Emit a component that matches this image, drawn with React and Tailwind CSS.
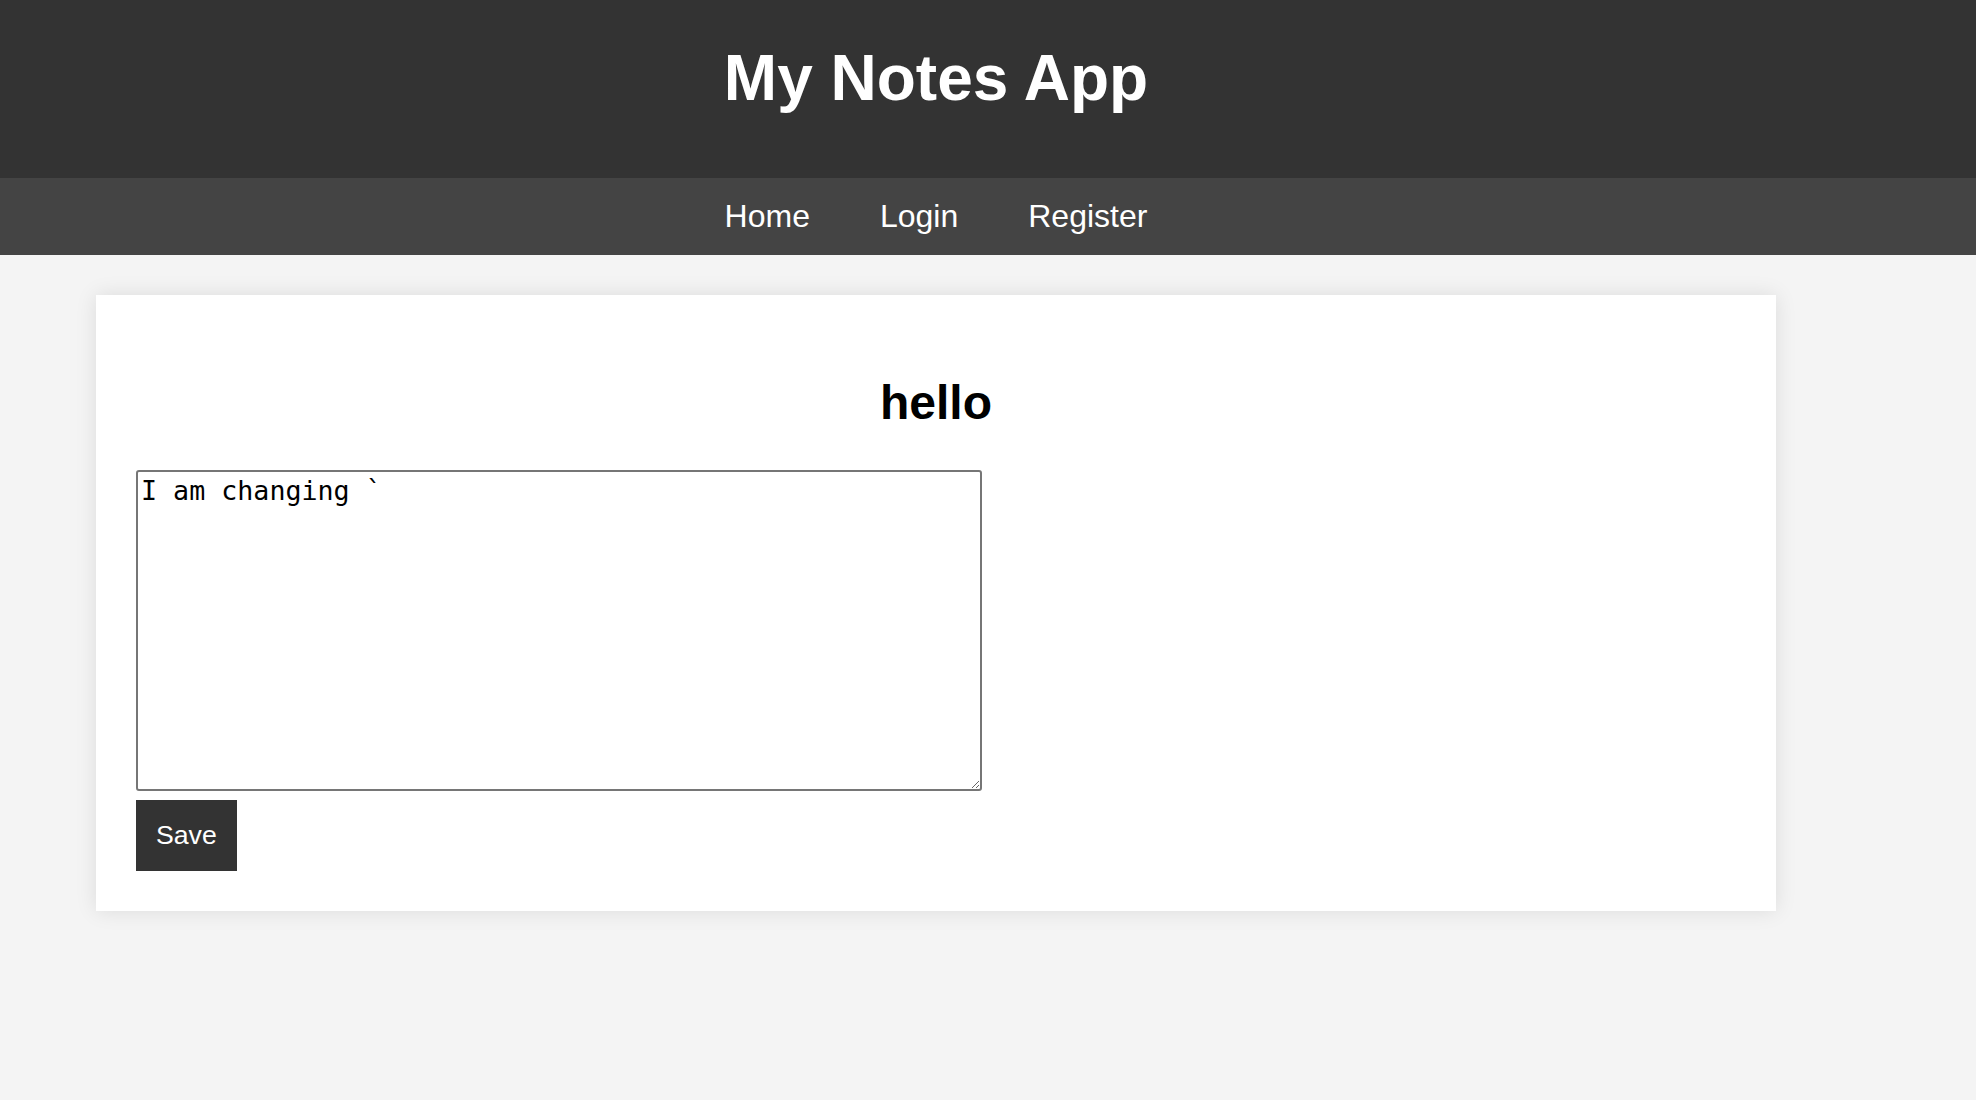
import React, { useState } from "react";

const navLinks = ["Home", "Login", "Register"];

const App = () => {
  const [content, setContent] = useState("I am changing `");

  return (
    <div className="min-h-screen bg-[#f4f4f4] font-['Liberation_Sans',Arial,sans-serif]">
      {/* Header */}
      <header className="bg-[#333333] text-white h-[178px] pt-[41px]">
        <div className="w-[1680px] ml-[96px] text-center">
          <h1 className="text-[64px] font-bold leading-[normal]">My Notes App</h1>
        </div>
      </header>

      {/* Nav */}
      <nav className="bg-[#444444] h-[77px] pt-[20px]">
        <div className="w-[1680px] ml-[96px] flex justify-center gap-[70px]">
          {navLinks.map((link) => (
            <a key={link} href="#" className="text-white text-[32px] leading-[normal]">
              {link}
            </a>
          ))}
        </div>
      </nav>

      {/* Note card */}
      <main className="pt-[40px]">
        <div className="w-[1680px] ml-[96px] bg-white p-[40px] shadow-[0_0_20px_rgba(0,0,0,0.1)]">
          <h2 className="text-center text-[48px] font-bold leading-[normal] mt-[40px] mb-[40px] text-black">
            hello
          </h2>
          <textarea
            value={content}
            onChange={(e) => setContent(e.target.value)}
            className="block w-[846px] h-[321px] border-2 border-[#767676] rounded-[3px] p-[3px] text-[26.67px] leading-[normal] text-black font-['DejaVu_Sans_Mono',monospace] outline-none"
          />
          <button className="block mt-[9px] bg-[#333333] text-white text-[26.67px] leading-[normal] px-[20px] py-[20px]">
            Save
          </button>
        </div>
      </main>
    </div>
  );
};

export default App;
